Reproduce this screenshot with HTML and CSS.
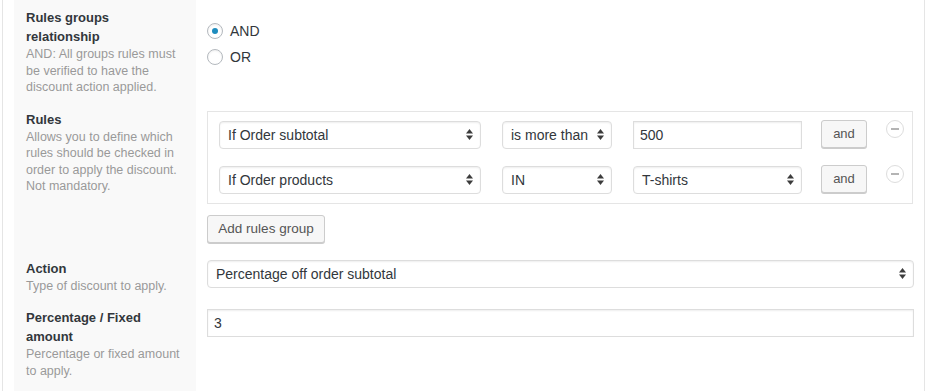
FILE: index.html
```html
<!DOCTYPE html>
<html>
  <head>
    <title>Discount rules</title>
    <link rel="stylesheet" href="styles.css">
  </head>

  <body>
    <div class="page">
      <div class="form">

        <!-- rules groups relationship -->
        <div class="label">
          <div class="label-title">Rules groups relationship</div>
          <div class="label-desc">AND: All groups rules must be verified to have the discount action applied.</div>
        </div>
        <div class="field">
          <div class="radios">
            <label class="radio-row"><span class="radio checked"></span>AND</label>
            <label class="radio-row"><span class="radio"></span>OR</label>
          </div>
        </div>

        <!-- rules -->
        <div class="label">
          <div class="label-title">Rules</div>
          <div class="label-desc">Allows you to define which rules should be checked in order to apply the discount. Not mandatory.</div>
        </div>
        <div class="field">
          <div class="rules-box">
            <div class="rule-row">
              <div class="select sel-type"><span>If Order subtotal</span>
                <svg class="arrows" width="7" height="11" viewBox="0 0 7 11"><polygon points="0,4.5 3.5,0 7,4.5"/><polygon points="0,6.5 3.5,11 7,6.5"/></svg>
              </div>
              <div class="select sel-op"><span>is more than</span>
                <svg class="arrows" width="7" height="11" viewBox="0 0 7 11"><polygon points="0,4.5 3.5,0 7,4.5"/><polygon points="0,6.5 3.5,11 7,6.5"/></svg>
              </div>
              <div class="text-input sel-value">500</div>
              <button class="btn btn-and" type="button">and</button>
              <span class="remove"><span class="remove-bar"></span></span>
            </div>
            <div class="rule-row">
              <div class="select sel-type"><span>If Order products</span>
                <svg class="arrows" width="7" height="11" viewBox="0 0 7 11"><polygon points="0,4.5 3.5,0 7,4.5"/><polygon points="0,6.5 3.5,11 7,6.5"/></svg>
              </div>
              <div class="select sel-op"><span>IN</span>
                <svg class="arrows" width="7" height="11" viewBox="0 0 7 11"><polygon points="0,4.5 3.5,0 7,4.5"/><polygon points="0,6.5 3.5,11 7,6.5"/></svg>
              </div>
              <div class="select sel-value"><span>T-shirts</span>
                <svg class="arrows" width="7" height="11" viewBox="0 0 7 11"><polygon points="0,4.5 3.5,0 7,4.5"/><polygon points="0,6.5 3.5,11 7,6.5"/></svg>
              </div>
              <button class="btn btn-and" type="button">and</button>
              <span class="remove"><span class="remove-bar"></span></span>
            </div>
          </div>
          <button class="btn btn-add" type="button">Add rules group</button>
        </div>

        <!-- action -->
        <div class="label">
          <div class="label-title">Action</div>
          <div class="label-desc">Type of discount to apply.</div>
        </div>
        <div class="field">
          <div class="select full"><span>Percentage off order subtotal</span>
            <svg class="arrows" width="7" height="11" viewBox="0 0 7 11"><polygon points="0,4.5 3.5,0 7,4.5"/><polygon points="0,6.5 3.5,11 7,6.5"/></svg>
          </div>
        </div>

        <!-- amount -->
        <div class="label">
          <div class="label-title">Percentage / Fixed amount</div>
          <div class="label-desc">Percentage or fixed amount to apply.</div>
        </div>
        <div class="field">
          <div class="text-input full">3</div>
        </div>

      </div>
    </div>
  </body>
</html>
```

FILE: styles.css
```css
body {
  margin: 0;
  background-color: #ffffff;
  color: #32373c;
  font-family: 'Liberation Sans', Arial, sans-serif;
}

.page {
  margin-left: 2px;
  width: 910px;
  padding-left: 11px;
  border-left: 1px solid #e5e5e5;
  border-right: 1px solid #e5e5e5;
  min-height: 391px;
}

.form {
  display: grid;
  grid-template-columns: 182px 1fr;
  min-height: 391px;
  background: linear-gradient(to right, #f9f9f9 182px, #ffffff 182px);
  align-content: start;
}

/* left column */
.label {
  padding: 8px 14px 6px 12px;
}

.label-title {
  font-size: 13px;
  font-weight: bold;
  line-height: 19px;
  color: #32373c;
}

.label-desc {
  font-size: 12.5px;
  line-height: 16.5px;
  color: #999999;
}

/* right column */
.field {
  padding: 9px 10px 8px 11px;
}

.radios {
  display: flex;
  flex-direction: column;
  margin-top: 9px;
}

.radio-row {
  display: flex;
  align-items: center;
  gap: 7px;
  height: 26px;
  font-size: 14px;
}

.radio {
  width: 14px;
  height: 14px;
  border: 1px solid #b4b9be;
  border-radius: 50%;
  background: #fff;
  box-shadow: inset 0 1px 2px rgba(0, 0, 0, 0.07);
  display: flex;
  align-items: center;
  justify-content: center;
}

.radio.checked::before {
  content: '';
  width: 6px;
  height: 6px;
  border-radius: 50%;
  background-color: #1e8cbe;
}

.rules-box {
  border: 1px solid #e5e5e5;
  padding: 9px 0 9px 11px;
  margin-right: 1px;
  display: flex;
  flex-direction: column;
  gap: 17px;
}

.rule-row {
  display: flex;
  align-items: flex-start;
}

.select,
.text-input {
  box-sizing: border-box;
  height: 28px;
  border: 1px solid #dddddd;
  background: #ffffff;
  box-shadow: inset 0 1px 2px rgba(0, 0, 0, 0.07);
  font-size: 14px;
  color: #32373c;
  display: flex;
  align-items: center;
}

.select {
  border-radius: 4px;
  padding: 0 7px 0 8px;
  justify-content: space-between;
}

.text-input {
  padding: 0 6px;
}

.arrows {
  fill: #3c3c3c;
  flex: none;
}

.sel-type {
  width: 262px;
}

.sel-op {
  width: 110px;
  margin-left: 21px;
}

.sel-value {
  width: 169px;
  margin-left: 21px;
}

.full {
  width: 100%;
}

.btn {
  box-sizing: border-box;
  height: 28px;
  padding: 0 10px;
  border: 1px solid #cccccc;
  border-radius: 3px;
  background: #f7f7f7;
  box-shadow: 0 1px 0 #cccccc;
  font-family: 'Liberation Sans', Arial, sans-serif;
  font-size: 13px;
  color: #555555;
}

.btn-and {
  width: 46px;
  padding: 0;
  margin-left: 19px;
  margin-top: -1px;
}

.btn-add {
  margin-top: 11px;
  width: 118px;
  font-size: 13.5px;
}

.remove {
  box-sizing: border-box;
  width: 18px;
  height: 18px;
  margin-left: 19px;
  margin-top: -1px;
  border: 1px solid #dddddd;
  border-radius: 50%;
  background: #fff;
  display: flex;
  align-items: center;
  justify-content: center;
}

.remove-bar {
  width: 8px;
  height: 2px;
  background-color: #b4b4b4;
}
```
